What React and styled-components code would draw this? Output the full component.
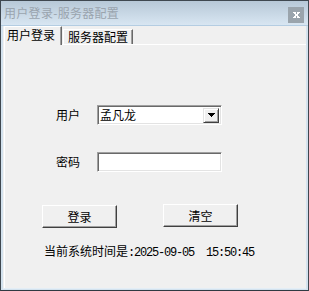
import React from "react";
import styled, { createGlobalStyle } from "styled-components";

const Global = createGlobalStyle`
  html, body { margin: 0; padding: 0; background: #f0f0f0; }
  body { width: 309px; height: 291px; overflow: hidden; }
  * { box-sizing: border-box; }
`;

const CJK = `"Noto Sans CJK SC", "Noto Sans", sans-serif`;

const Window = styled.div`
  width: 309px;
  height: 291px;
  border: 1px solid #3f4850;
  border-bottom-color: #2f3a42;
  background: #d3e2ee;
  display: flex;
  flex-direction: column;
  font-family: ${CJK};
  font-size: 12px;
  color: #000;
`;

const TitleBar = styled.div`
  height: 25px;
  flex: none;
  display: flex;
  align-items: center;
  justify-content: space-between;
  padding: 0 4px 0 3px;
  background: linear-gradient(#b7c8d7, #d8e6f2);
  border-bottom: 1px solid #b4cde2;
`;

const Title = styled.span`
  color: #9aa4ae;
  font-size: 12px;
  line-height: 14px;
  letter-spacing: 0.3px;
`;

const CloseBtn = styled.div`
  width: 16px;
  height: 16px;
  margin-top: 4px;
  background: #9aa4ac;
  display: flex;
  align-items: center;
  justify-content: center;
`;

const Client = styled.div`
  flex: 1;
  margin: 0 2px 1px 2px;
  background: #f0f0f0;
  border-bottom: 1px solid #e4eef6;
  display: flex;
  flex-direction: column;
  padding-left: 1px;
`;

const TabStrip = styled.div`
  height: 18px;
  flex: none;
  display: flex;
  align-items: flex-end;
  position: relative;
  z-index: 1;
`;

const Tab = styled.div`
  width: ${(p) => p.$w}px;
  height: ${(p) => (p.$active ? 19 : 15)}px;
  margin-bottom: ${(p) => (p.$active ? -1 : 0)}px;
  margin-left: ${(p) => p.$ml || 0}px;
  padding-left: ${(p) => p.$pl}px;
  padding-top: ${(p) => (p.$active ? 1 : 0)}px;
  background: #f0f0f0;
  border-top: 1px solid #ffffff;
  border-left: 1px solid #ffffff;
  border-right: 1px solid #696969;
  box-shadow: inset -1px 0 0 #a0a0a0;
  line-height: 14px;
  white-space: nowrap;
`;

const Panel = styled.div`
  flex: 1;
  border-top: 1px solid #ffffff;
  border-left: 1px solid #ffffff;
  display: flex;
  flex-direction: column;
`;

const Form = styled.div`
  margin: 60px 0 0 51px;
  display: grid;
  grid-template-columns: 41px 125px;
  grid-auto-rows: 20px;
  row-gap: 27px;
  align-items: center;
`;

const Label = styled.span`
  line-height: 20px;
`;

const Field = styled.div`
  height: 20px;
  background: #ffffff;
  border-top: 1px solid #a0a0a0;
  border-left: 1px solid #a0a0a0;
  border-right: 1px solid #ffffff;
  border-bottom: 1px solid #ffffff;
  box-shadow: inset 1px 1px 0 #696969, inset -1px -1px 0 #e3e3e3;
  display: flex;
  align-items: center;
  justify-content: space-between;
  padding: 0 2px 0 2px;
  line-height: 14px;
`;

const DropBtn = styled.div`
  width: 16px;
  height: 15px;
  background: #f0f0f0;
  border-top: 1px solid #e3e3e3;
  border-left: 1px solid #e3e3e3;
  border-right: 1px solid #404040;
  border-bottom: 1px solid #404040;
  box-shadow: inset 1px 1px 0 #ffffff, inset -1px -1px 0 #a0a0a0;
  display: flex;
  align-items: center;
  justify-content: center;
`;

const Buttons = styled.div`
  margin: 32px 0 0 37px;
  display: flex;
  gap: 46px;
  align-items: flex-start;
`;

const Button = styled.div`
  width: 75px;
  height: 23px;
  margin-top: ${(p) => p.$mt || 0}px;
  background: #f0f0f0;
  border-top: 1px solid #ffffff;
  border-left: 1px solid #ffffff;
  border-right: 1px solid #404040;
  border-bottom: 1px solid #404040;
  box-shadow: inset -1px -1px 0 #a0a0a0;
  display: flex;
  align-items: center;
  justify-content: center;
  line-height: 14px;
`;

const TimeLine = styled.div`
  margin: 16px 0 0 39px;
  line-height: 14px;
  white-space: pre;
  display: flex;
  align-items: baseline;
`;

const Mono = styled.span`
  font-family: "Liberation Mono", "DejaVu Sans Mono", monospace;
  font-size: 12px;
  letter-spacing: -1.2px;
  white-space: pre;
`;

export default function App() {
  return (
    <>
      <Global />
      <Window>
        <TitleBar>
          <Title>用户登录-服务器配置</Title>
          <CloseBtn>
            <svg width="7" height="6" viewBox="0 0 7 6" shapeRendering="crispEdges">
              <path
                fill="#fff"
                d="M0 0h3v1h-3zM4 0h3v1h-3zM1 1h2v1h-2zM4 1h2v1h-2zM2 2h3v2h-3zM1 4h2v1h-2zM4 4h2v1h-2zM0 5h3v1h-3zM4 5h3v1h-3z"
              />
            </svg>
          </CloseBtn>
        </TitleBar>
        <Client>
          <TabStrip>
            <Tab $active $w={58} $pl={2}>用户登录</Tab>
            <Tab $w={70} $ml={1} $pl={4}>服务器配置</Tab>
          </TabStrip>
          <Panel>
            <Form>
              <Label>用户</Label>
              <Field>
                <span>孟凡龙</span>
                <DropBtn>
                  <svg width="7" height="4" viewBox="0 0 7 4" shapeRendering="crispEdges">
                    <path fill="#000" d="M0 0h7v1h-1v1h-1v1h-1v1h-1v-1h-1v-1h-1v-1h-1z" />
                  </svg>
                </DropBtn>
              </Field>
              <Label>密码</Label>
              <Field />
            </Form>
            <Buttons>
              <Button $mt={1}>登录</Button>
              <Button>清空</Button>
            </Buttons>
            <TimeLine>
              <span>当前系统时间是</span>
              <Mono>:2025-09-05  15:50:45</Mono>
            </TimeLine>
          </Panel>
        </Client>
      </Window>
    </>
  );
}
